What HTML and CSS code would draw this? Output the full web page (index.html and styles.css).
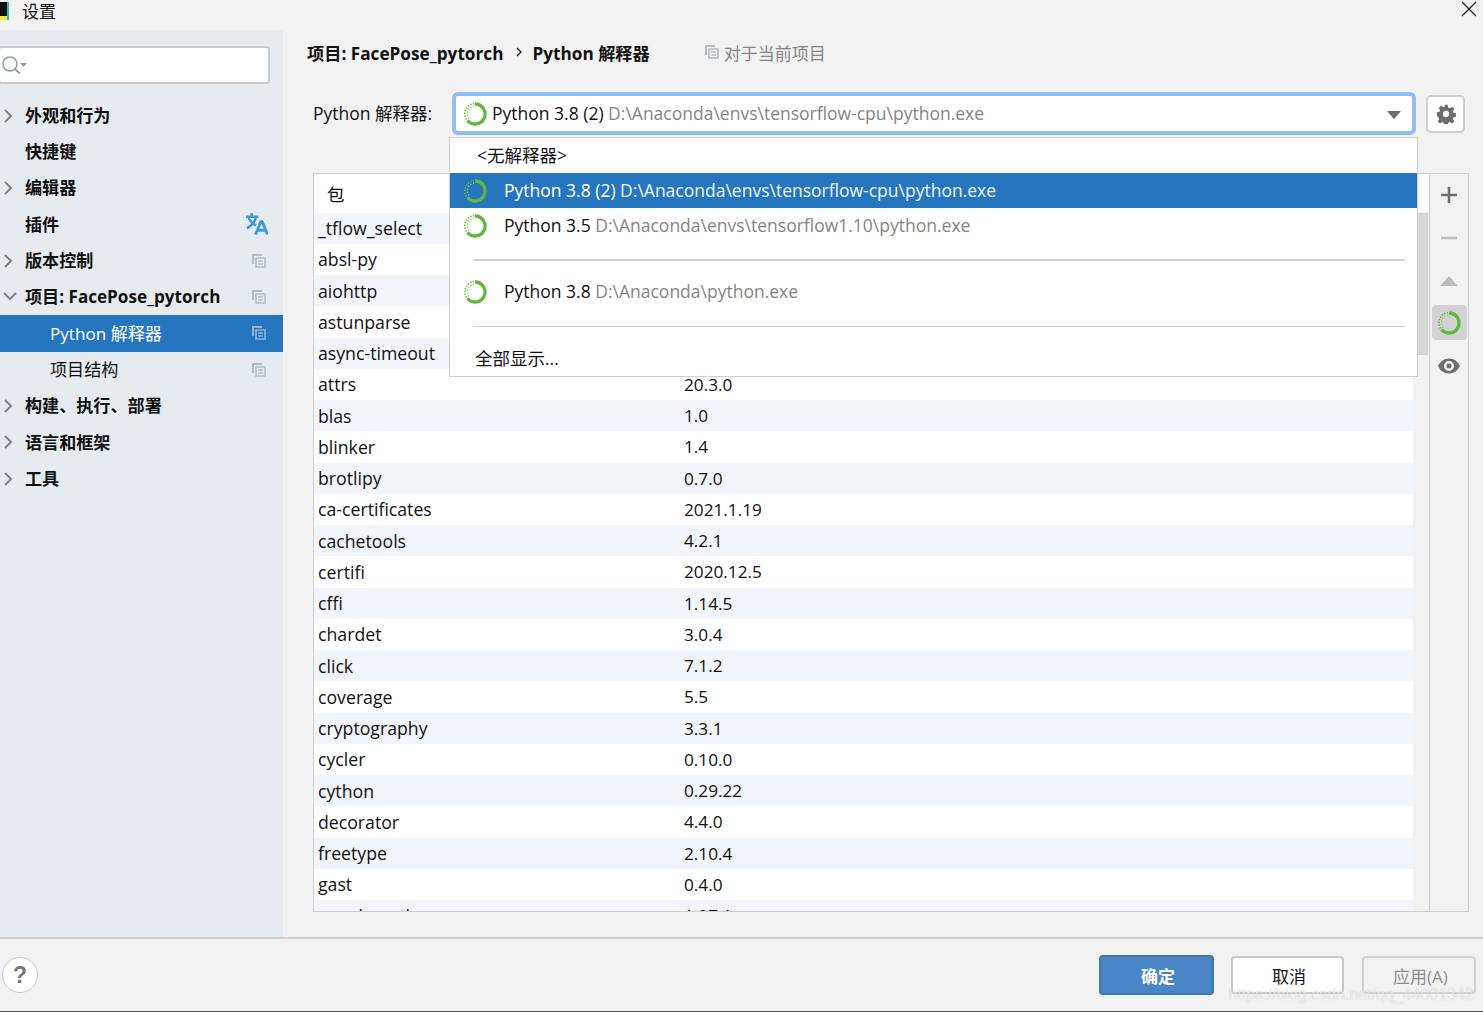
FILE: index.html
```html
<!DOCTYPE html>
<html lang="zh">

<head>
    <meta charset="UTF-8">
    <title>设置</title>
    <link rel="stylesheet" href="styles.css">
</head>

<body>
    <svg class="defs" width="0" height="0">
        <symbol id="py" viewBox="0 0 24 24">
            <path d="M12 2a10 10 0 1 1-7.600 16.500" fill="none" stroke="#62b83f" stroke-width="3.400" />
            <path d="M3.500 17.500A10.500 10.500 0 0 1 11 1.500" fill="none" stroke="#62b83f" stroke-width="1.500" stroke-dasharray="1.500 1.300" />
            <path d="M6 16.500A7.800 7.800 0 0 1 11 4" fill="none" stroke="#8acb6f" stroke-width="1.500" stroke-dasharray="1.300 1.700" />
        </symbol>
        <symbol id="copy" viewBox="0 0 14 14">
            <path d="M1 10V1h9" fill="none" stroke="currentColor" stroke-width="2" />
            <path d="M4 4h9v9H4zM6 7h5M6 10h5" fill="none" stroke="currentColor" stroke-width="1.600" />
        </symbol>
    </svg>

    <div class="titlebar">
        <div class="app-icon"></div>
        <span class="title">设置</span>
        <svg class="close" viewBox="0 0 16 16" width="16" height="16">
            <path d="M1 1l14 14M15 1L1 15" stroke="#222" stroke-width="1.300" />
        </svg>
    </div>

    <div class="middle">
        <!-- left tree -->
        <div class="sidebar">
            <div class="search">
                <svg viewBox="0 0 28 20" width="28" height="20">
                    <circle cx="8" cy="8" r="7" fill="none" stroke="#8f9aa3" stroke-width="1.500" />
                    <path d="M13 13l5 4.500" stroke="#8f9aa3" stroke-width="1.800" />
                    <path d="M18 7h7l-3.500 4z" fill="#8f9aa3" />
                </svg>
            </div>
            <div class="tree">
                <div class="node bold"><svg class="arrow" viewBox="0 0 10 16"><path d="M2 2l6 6-6 6" /></svg><span>外观和行为</span></div>
                <div class="node bold"><span>快捷键</span></div>
                <div class="node bold"><svg class="arrow" viewBox="0 0 10 16"><path d="M2 2l6 6-6 6" /></svg><span>编辑器</span></div>
                <div class="node bold"><span>插件</span>
                    <svg class="lang" viewBox="0 0 24 24" width="23" height="23">
                        <path d="M1 5h13M7 1v4M11.500 5c-1 5-4 9-9.500 12M3.500 5c1.500 5 4.500 7 8 9" fill="none" stroke="#3d9bd6" stroke-width="2.600" />
                        <path d="M11 23.500l5.500-13.500h1.500l5.500 13.500M13 19h9" fill="none" stroke="#3d9bd6" stroke-width="3" />
                    </svg>
                </div>
                <div class="node bold"><svg class="arrow" viewBox="0 0 10 16"><path d="M2 2l6 6-6 6" /></svg><span>版本控制</span><svg class="copy"><use href="#copy" /></svg></div>
                <div class="node bold"><svg class="arrow open" viewBox="0 0 16 10"><path d="M2 2l6 6 6-6" /></svg><span>项目: FacePose_pytorch</span><svg class="copy"><use href="#copy" /></svg></div>
                <div class="node child selected"><span>Python 解释器</span><svg class="copy"><use href="#copy" /></svg></div>
                <div class="node child"><span>项目结构</span><svg class="copy"><use href="#copy" /></svg></div>
                <div class="node bold"><svg class="arrow" viewBox="0 0 10 16"><path d="M2 2l6 6-6 6" /></svg><span>构建、执行、部署</span></div>
                <div class="node bold"><svg class="arrow" viewBox="0 0 10 16"><path d="M2 2l6 6-6 6" /></svg><span>语言和框架</span></div>
                <div class="node bold"><svg class="arrow" viewBox="0 0 10 16"><path d="M2 2l6 6-6 6" /></svg><span>工具</span></div>
            </div>
        </div>

        <!-- right panel -->
        <div class="content">
            <div class="crumbs">
                <b>项目: FacePose_pytorch</b>
                <svg class="sep" viewBox="0 0 6 10" width="6" height="10"><path d="M1 1l4 4-4 4" fill="none" stroke="#222" stroke-width="1.400" /></svg>
                <b>Python 解释器</b>
                <span class="scope"><svg class="copy"><use href="#copy" /></svg>对于当前项目</span>
            </div>

            <div class="interp-row">
                <label>Python 解释器:</label>
                <div class="combo">
                    <svg class="py"><use href="#py" /></svg>
                    <span>Python 3.8 (2) <i>D:\Anaconda\envs\tensorflow-cpu\python.exe</i></span>
                    <div class="caret"></div>
                </div>
                <div class="gear">
                    <svg viewBox="0 0 24 24" width="20" height="20">
                        <path fill-rule="evenodd" fill="#6e6e6e" d="M10 1h4l.6 3.200 2 .8 2.700-1.800 2.800 2.800-1.800 2.700.8 2 3.200.6v4l-3.200.6-.8 2 1.800 2.700-2.800 2.800-2.700-1.800-2 .8-.6 3.200h-4l-.6-3.200-2-.8-2.700 1.800-2.800-2.800 1.800-2.700-.8-2L1 14v-4l3.200-.6.8-2L3.200 4.700 6 2l2.700 1.800 2-.8zM12 8.200a3.800 3.800 0 1 0 0 7.600 3.800 3.800 0 0 0 0-7.600z" />
                    </svg>
                </div>

                <div class="popup">
                    <div class="opt none">&lt;无解释器&gt;</div>
                    <div class="opt active"><svg class="py"><use href="#py" /></svg><span>Python 3.8 (2) <i>D:\Anaconda\envs\tensorflow-cpu\python.exe</i></span></div>
                    <div class="opt"><svg class="py"><use href="#py" /></svg><span>Python 3.5 <i>D:\Anaconda\envs\tensorflow1.10\python.exe</i></span></div>
                    <div class="divider thick"></div>
                    <div class="opt"><svg class="py"><use href="#py" /></svg><span>Python 3.8 <i>D:\Anaconda\python.exe</i></span></div>
                    <div class="divider"></div>
                    <div class="opt all">全部显示...</div>
                </div>
            </div>

            <div class="packages">
                <div class="table">
                    <div class="thead">包</div>
                    <div class="tbody">
                        <div class="row"><span>_tflow_select</span></div>
                        <div class="row"><span>absl-py</span></div>
                        <div class="row"><span>aiohttp</span></div>
                        <div class="row"><span>astunparse</span></div>
                        <div class="row"><span>async-timeout</span></div>
                        <div class="row"><span>attrs</span><span>20.3.0</span></div>
                        <div class="row"><span>blas</span><span>1.0</span></div>
                        <div class="row"><span>blinker</span><span>1.4</span></div>
                        <div class="row"><span>brotlipy</span><span>0.7.0</span></div>
                        <div class="row"><span>ca-certificates</span><span>2021.1.19</span></div>
                        <div class="row"><span>cachetools</span><span>4.2.1</span></div>
                        <div class="row"><span>certifi</span><span>2020.12.5</span></div>
                        <div class="row"><span>cffi</span><span>1.14.5</span></div>
                        <div class="row"><span>chardet</span><span>3.0.4</span></div>
                        <div class="row"><span>click</span><span>7.1.2</span></div>
                        <div class="row"><span>coverage</span><span>5.5</span></div>
                        <div class="row"><span>cryptography</span><span>3.3.1</span></div>
                        <div class="row"><span>cycler</span><span>0.10.0</span></div>
                        <div class="row"><span>cython</span><span>0.29.22</span></div>
                        <div class="row"><span>decorator</span><span>4.4.0</span></div>
                        <div class="row"><span>freetype</span><span>2.10.4</span></div>
                        <div class="row"><span>gast</span><span>0.4.0</span></div>
                        <div class="row"><span>google-auth</span><span>1.27.1</span></div>
                    </div>
                </div>
                <div class="scrollbar"><div class="thumb"></div></div>
                <div class="tools">
                    <div class="tool"><svg viewBox="0 0 16 16" width="16" height="16"><path d="M8 0v16M0 8h16" stroke="#6e6e6e" stroke-width="2.600" /></svg></div>
                    <div class="tool"><svg viewBox="0 0 16 16" width="16" height="16"><path d="M0 8h16" stroke="#bdbdbd" stroke-width="2.600" /></svg></div>
                    <div class="tool"><svg viewBox="0 0 18 10" width="18" height="10"><path d="M9 0l9 10H0z" fill="#bdbdbd" /></svg></div>
                    <div class="tool on"><svg class="py"><use href="#py" /></svg></div>
                    <div class="tool"><svg viewBox="0 0 24 16" width="24" height="16"><path fill-rule="evenodd" fill="#6e6e6e" d="M12 .5c5 0 9 3 11 7.500-2 4.500-6 7.500-11 7.500S3 12.500 1 8C3 3.500 7 .5 12 .5zM12 3a5 5 0 1 0 0 10 5 5 0 0 0 0-10zm0 2.500a2.500 2.500 0 1 1 0 5 2.500 2.500 0 0 1 0-5z" /></svg></div>
                </div>
            </div>
        </div>
    </div>

    <div class="footer">
        <div class="help">?</div>
        <div class="buttons">
            <button class="primary">确定</button>
            <button>取消</button>
            <button class="disabled">应用(A)</button>
        </div>
        <div class="watermark">https://blog.csdn.net/qq_44001342</div>
    </div>
    <div class="edge"></div>
</body>

</html>
```

FILE: styles.css
```css
* {
    box-sizing: border-box;
}

html,
body {
    margin: 0;
    height: 100%;
}

body {
    width: 1483px;
    height: 1013px;
    overflow: hidden;
    display: flex;
    flex-direction: column;
    background-color: #f2f2f2;
    color: #111;
    font-family: "Open Sans", "Noto Sans CJK SC", sans-serif;
    font-size: 17.5px;
}

.defs {
    position: absolute;
}

i {
    font-style: normal;
    color: #858585;
}

.titlebar {
    height: 30px;
    flex: none;
    display: flex;
    align-items: flex-start;
    position: relative;
}

.app-icon {
    width: 9px;
    height: 18px;
    margin-top: 2px;
    background: linear-gradient(180deg, #111 0 80%, #f2e53a 80%);
    border-right: 2px solid #27c2b0;
}

.title {
    margin-left: 13px;
    font-size: 17px;
    line-height: 24px;
}

.close {
    position: absolute;
    right: 6px;
    top: 1px;
}

.middle {
    height: 907px;
    flex: none;
    display: flex;
}

.sidebar {
    width: 283px;
    flex: none;
    background-color: #e6ebf0;
    padding-top: 16px;
}

.search {
    width: 272px;
    height: 38px;
    margin-left: -2px;
    background: white;
    border: 2px solid #c8cbce;
    border-radius: 4px;
    padding: 8px 0 0 2px;
}

.tree {
    margin-top: 13.7px;
}

.node {
    height: 36.3px;
    display: flex;
    align-items: center;
    padding-left: 25px;
    position: relative;
    font-size: 17.1px;
}

.node span {
    padding-bottom: 3px;
}

.bold {
    font-weight: 700;
}

.child {
    padding-left: 50px;
}

.selected {
    background-color: #2675bf;
    color: white;
}

.arrow {
    position: absolute;
    left: 3px;
    top: 10px;
    width: 10px;
    height: 16px;
    fill: none;
    stroke: #808080;
    stroke-width: 2;
}

.arrow.open {
    left: 2px;
    top: 12px;
    width: 16px;
    height: 10px;
}

.lang {
    position: absolute;
    right: 15px;
    top: 5px;
}

.copy {
    width: 14px;
    height: 14px;
    color: #b4bcc4;
}

.node .copy {
    position: absolute;
    right: 17px;
    top: 11px;
}

.selected .copy {
    color: #8fb6dc;
}

.content {
    flex: 1;
    padding-left: 24px;
    min-width: 0;
}

.crumbs {
    height: 24px;
    margin-top: 10px;
    display: flex;
    align-items: center;
    font-size: 17.2px;
}

.crumbs b {
    font-weight: 700;
}

.sep {
    margin: 0 10px 0 13px;
}

.scope {
    display: flex;
    align-items: center;
    gap: 5px;
    margin-left: 55px;
    font-size: 17px;
    color: #858585;
}

.interp-row {
    position: relative;
    height: 43px;
    margin-top: 28px;
    margin-left: 6px;
    display: flex;
    align-items: center;
}

.interp-row label {
    width: 139px;
    padding-bottom: 2px;
}

.combo {
    width: 964px;
    height: 43px;
    display: flex;
    align-items: center;
    background: white;
    border: 4px solid #92bdf0;
    border-radius: 6px;
    padding-left: 7px;
    position: relative;
}

.combo span {
    padding-bottom: 2px;
}

.py {
    width: 24px;
    height: 24px;
    flex: none;
}

.combo .py {
    margin-right: 5px;
}

.caret {
    position: absolute;
    right: 11px;
    top: 15px;
    border-left: 7px solid transparent;
    border-right: 7px solid transparent;
    border-top: 8px solid #6e6e6e;
}

.gear {
    width: 39px;
    height: 38px;
    margin-left: 10px;
    display: flex;
    align-items: center;
    justify-content: center;
    background: white;
    border: 2px solid #cfcfcf;
    border-radius: 5px;
}

/* dropdown list over the table */
.popup {
    position: absolute;
    left: 136px;
    top: 45px;
    width: 969px;
    height: 240px;
    background: white;
    border: 1px solid #cfcfcf;
    z-index: 2;
}

.opt {
    height: 35px;
    display: flex;
    align-items: center;
    padding-left: 13px;
    padding-bottom: 2px;
}

.opt .py {
    margin: 2px 17px 0 0;
}

.opt.none {
    padding-left: 27px;
}

.opt.active {
    background-color: #2675bf;
    color: white;
}

.opt.active i {
    color: #f0f5fa;
}

.divider {
    height: 1px;
    margin: 17px 12px 15px 23px;
    background-color: #d2d2d2;
}

.divider.thick {
    height: 2px;
    margin: 16px 12px 13px 23px;
}

.opt.all {
    height: 34px;
    padding-left: 25px;
    padding-bottom: 4px;
}

.packages {
    height: 739px;
    margin-top: 38px;
    width: 1156px;
    margin-left: 6px;
    display: flex;
    border: 1px solid #cfcfcf;
    overflow: hidden;
}

.table {
    width: 1099px;
    flex: none;
}

.thead {
    height: 38.5px;
    line-height: 40px;
    padding-left: 13px;
    background: white;
}

.row {
    height: 31.25px;
    display: flex;
    align-items: center;
    padding-left: 4px;
    background: white;
    font-size: 17.2px;
}

.row:nth-child(odd) {
    background-color: #f2f5f9;
}

.row span:first-child {
    width: 366px;
    font-size: 17.7px;
}

.scrollbar {
    width: 16px;
    flex: none;
    padding: 39px 1px 0 4px;
    background: linear-gradient(#fbfbfb 38px, #f2f2f2 38px);
}

.thumb {
    height: 142px;
    background-color: #d9d9d9;
    border: 1px solid #cfcfcf;
}

.tools {
    flex: 1;
    border-left: 1px solid #cfcfcf;
    display: flex;
    flex-direction: column;
    align-items: center;
    padding-top: 3px;
}

.tool {
    width: 35px;
    height: 35px;
    margin-bottom: 8px;
    display: flex;
    align-items: center;
    justify-content: center;
    border-radius: 4px;
}

.tool.on {
    background-color: #d2d2d2;
    margin-top: -1px;
}

.footer {
    height: 74px;
    flex: none;
    position: relative;
    display: flex;
    align-items: center;
    justify-content: space-between;
    border-top: 2px solid #d0d0d0;
    padding: 0 7px 0 2px;
}

.help {
    width: 36px;
    height: 36px;
    border-radius: 50%;
    border: 1px solid #c8c8c8;
    background: white;
    color: #777;
    font-family: "Liberation Sans", sans-serif;
    font-weight: 700;
    font-size: 23px;
    line-height: 34px;
    text-align: center;
}

.buttons {
    display: flex;
    align-items: center;
    gap: 17px;
}

button {
    width: 113px;
    height: 38px;
    padding: 0 0 0 3px;
    background: white;
    border: 2px solid #c9c9c9;
    border-radius: 4px;
    color: #111;
    font-family: inherit;
    font-size: 17px;
}

button.primary {
    width: 115px;
    height: 40px;
    background-color: #4a86c6;
    border-color: #4077b3;
    color: white;
    font-weight: 700;
}

button.disabled {
    width: 114px;
    margin-left: 1px;
    background: transparent;
    border-color: #d2d2d2;
    color: #8e8e8e;
}

.watermark {
    position: absolute;
    right: 9px;
    top: 46px;
    color: rgba(255, 255, 255, 0.6);
    text-shadow: 0 0 1px rgba(120, 120, 120, 0.35);
    font-family: "Liberation Sans", sans-serif;
    font-size: 16px;
    line-height: 20px;
}

.edge {
    height: 2px;
    flex: none;
    background-color: white;
    border-top: 1px solid #555;
}
```
